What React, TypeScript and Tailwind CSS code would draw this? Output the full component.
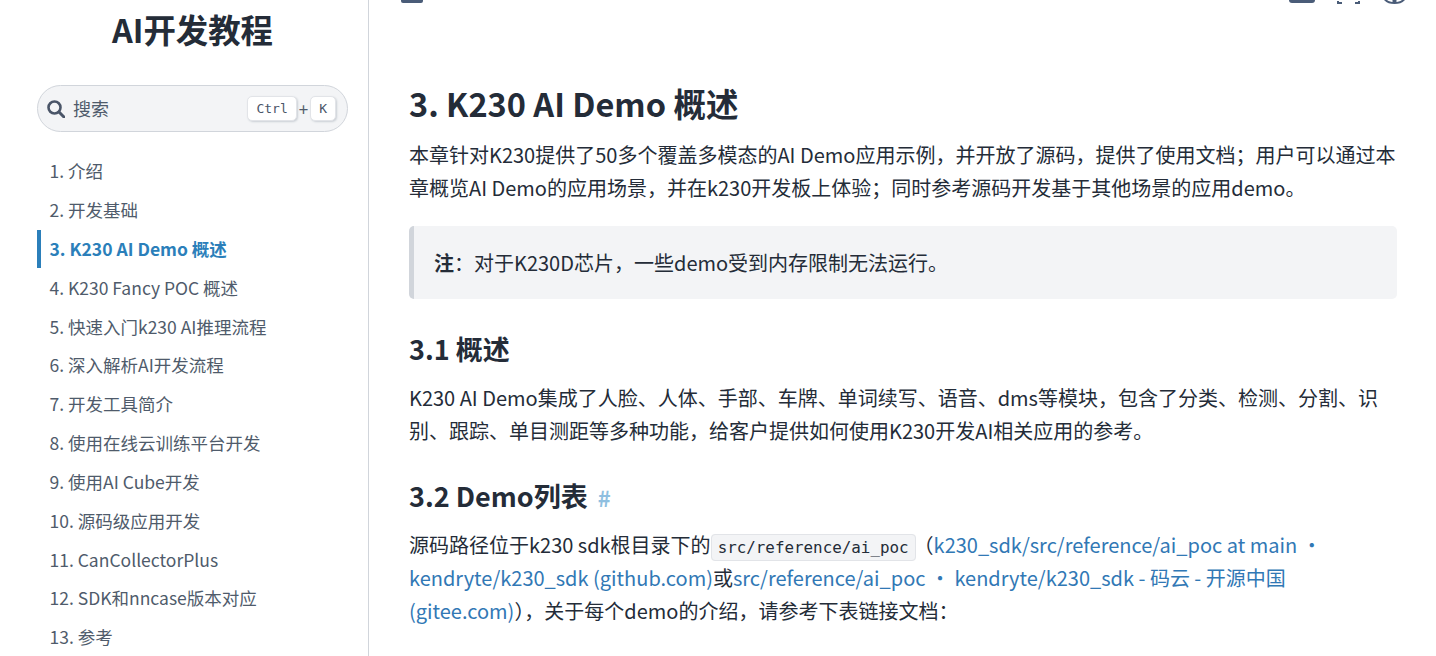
const chapters = [
  '1. 介绍',
  '2. 开发基础',
  '3. K230 AI Demo 概述',
  '4. K230 Fancy POC 概述',
  '5. 快速入门k230 AI推理流程',
  '6. 深入解析AI开发流程',
  '7. 开发工具简介',
  '8. 使用在线云训练平台开发',
  '9. 使用AI Cube开发',
  '10. 源码级应用开发',
  '11. CanCollectorPlus',
  '12. SDK和nncase版本对应',
  '13. 参考',
]

const ACTIVE = '3. K230 AI Demo 概述'

function Kbd({ children }: { children: string }) {
  return (
    <kbd className="flex h-[25px] items-center rounded-[5px] border border-[#e2e4e8] bg-white px-[8px] font-['DejaVu_Sans_Mono',monospace] text-[13px] text-[#4a5568] shadow-[1px_1px_2px_#cbd0d6]">
      {children}
    </kbd>
  )
}

function SearchIcon() {
  return (
    <svg width="18" height="18" viewBox="0 0 18 18" className="shrink-0 text-[#4a5568]">
      <circle cx="7.5" cy="7.5" r="6" fill="none" stroke="currentColor" strokeWidth="2.6" />
      <path d="M12 12l5 5" stroke="currentColor" strokeWidth="3" strokeLinecap="round" />
    </svg>
  )
}

function Sidebar() {
  return (
    <aside className="h-[656px] w-[369px] shrink-0 overflow-hidden border-r border-[#d1d5db] pr-[20px] pl-[37px]">
      <h1 className="pt-[7px] text-center text-[32.4px] leading-[44px] font-bold text-[#242c38]">
        AI开发教程
      </h1>
      <div className="mt-[34px] flex h-[47px] items-center rounded-full border border-[#d1d5db] bg-[#f3f4f6] pr-[11px] pl-[9px]">
        <SearchIcon />
        <span className="ml-[8px] text-[18px] text-[#4f5b6b]">搜索</span>
        <div className="ml-auto flex items-center gap-[2px]">
          <Kbd>Ctrl</Kbd>
          <span className="text-[17px] text-[#4f5b6b]">+</span>
          <Kbd>K</Kbd>
        </div>
      </div>
      <nav className="mt-[20px]">
        {chapters.map((c) => (
          <div
            key={c}
            className={
              c === ACTIVE
                ? 'flex h-[38.83px] items-center border-l-4 border-[#2b7fba] pl-[8.5px] text-[17.5px] font-bold text-[#2b7fba]'
                : 'flex h-[38.83px] items-center border-l-4 border-transparent pl-[8.5px] text-[17.5px] text-[#4f5b6b]'
            }
          >
            {c}
          </div>
        ))}
      </nav>
    </aside>
  )
}

function Link({ children }: { children: string }) {
  return <span className="text-[#3178b5]">{children}</span>
}

// toolbar is scrolled almost out of view, only the bottom edge of its icons shows
function Toolbar() {
  return (
    <div className="flex h-[5px] items-start overflow-hidden pr-[31px] pl-[32px] text-[#4a5c78]">
      <div className="h-[3px] w-[22px] rounded-b-[2px] bg-[#4a5c78]" />
      <div className="ml-auto h-[3px] w-[26px] rounded-b-[3px] bg-[#4a5c78]" />
      <svg className="ml-[22px]" width="23" height="5" viewBox="0 0 23 5">
        <path d="M1 1v2h4M22 1v2h-4" fill="none" stroke="currentColor" strokeWidth="2" />
      </svg>
      <svg className="ml-[24px]" width="21" height="5" viewBox="0 0 21 5">
        <path d="M0 0c3 3 6 4 10.500 4s7.500-1 10.500-4h-3c-2 1.500-4 2-7.500 2s-5.500-.5-7.500-2z" fill="currentColor" />
        <path d="M8.500 0h4v2h-4z" fill="currentColor" />
      </svg>
    </div>
  )
}

function Content() {
  return (
    <main className="h-[656px] min-w-0 flex-1 overflow-hidden text-[20px] leading-[33px] text-[#242c38]">
      <Toolbar />
      <div className="pr-[39px] pl-[40px]">
        <h2 className="mt-[76px] text-[32.5px] leading-[44px] font-bold">3. K230 AI Demo 概述</h2>
        <p className="mt-[13px]">
          本章针对K230提供了50多个覆盖多模态的AI Demo应用示例，并开放了源码，提供了使用文档；用户可以通过本章概览AI Demo的应用场景，并在k230开发板上体验；同时参考源码开发基于其他场景的应用demo。
        </p>
        <blockquote className="mt-[22px] flex h-[73px] items-center rounded-[5px] border-l-[5px] border-[#d1d5db] bg-[#f3f4f6] pl-[20px]">
          <p>
            <strong>注</strong>：对于K230D芯片，一些demo受到内存限制无法运行。
          </p>
        </blockquote>
        <h3 className="mt-[28px] text-[27px] leading-[44px] font-bold">3.1 概述</h3>
        <p className="mt-[10px]">
          K230 AI Demo集成了人脸、人体、手部、车牌、单词续写、语音、dms等模块，包含了分类、检测、分割、识别、跟踪、单目测距等多种功能，给客户提供如何使用K230开发AI相关应用的参考。
        </p>
        <h3 className="mt-[27px] flex items-baseline text-[27px] leading-[44px] font-bold">
          3.2 Demo列表
          <span className="ml-[10px] text-[22px] text-[#8fbfe0]">#</span>
        </h3>
        <p className="mt-[9px]">
          源码路径位于k230 sdk根目录下的
          <code className="mr-[-2px] rounded-[4px] border border-[#e2e4e8] bg-[#f3f4f6] px-[6px] py-[3px] font-['DejaVu_Sans_Mono',monospace] text-[15.87px] leading-none">
            src/reference/ai_poc
          </code>
          （<Link>k230_sdk/src/reference/ai_poc at main · kendryte/k230_sdk (github.com)</Link>或
          <Link>src/reference/ai_poc · kendryte/k230_sdk - 码云 - 开源中国 (gitee.com)</Link>
          ），关于每个demo的介绍，请参考下表链接文档：
        </p>
      </div>
    </main>
  )
}

export default function App() {
  return (
    <div className="flex h-[656px] overflow-hidden bg-white font-['Noto_Sans_CJK_SC','Noto_Sans',sans-serif]">
      <Sidebar />
      <Content />
    </div>
  )
}
